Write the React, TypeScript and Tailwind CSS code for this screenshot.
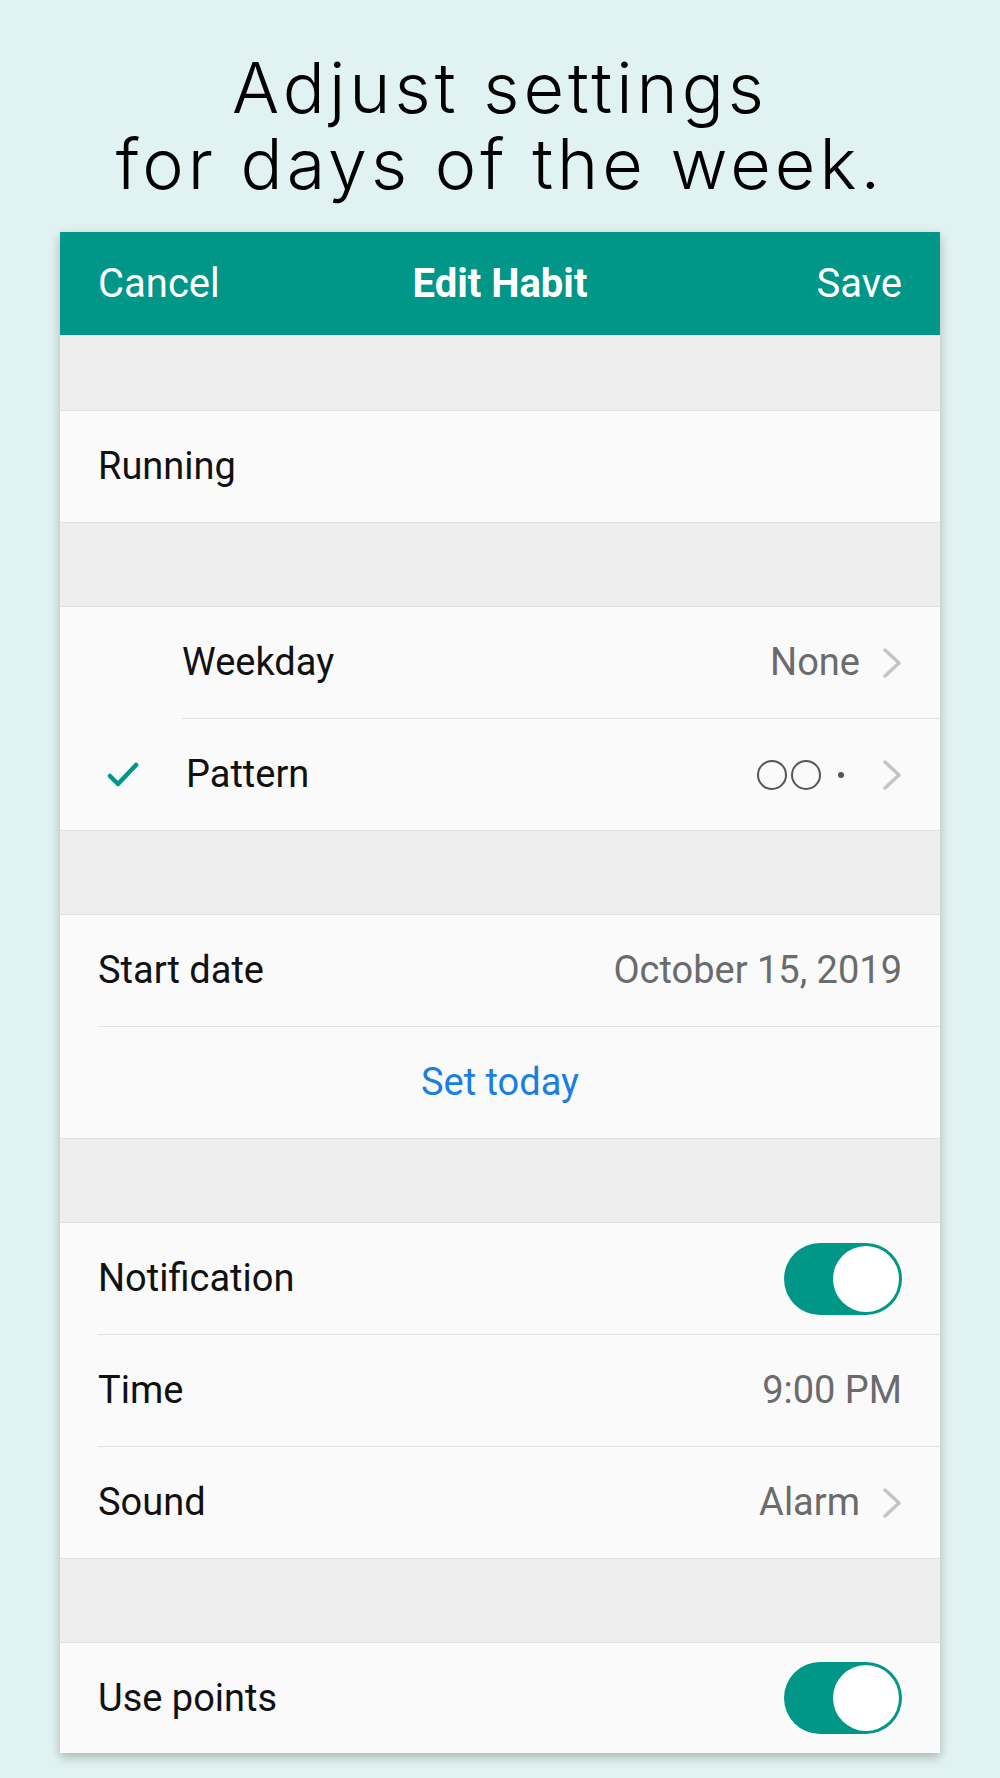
import { ReactNode } from 'react';

const TEAL = '#009688';

function Chevron({ gap = 'ml-[22px]' }: { gap?: string }) {
  return (
    <svg width="20" height="30" viewBox="0 0 20 30" className={`${gap} shrink-0`}>
      <polyline points="3,2 17,15 3,28" fill="none" stroke="#c4c4c4" strokeWidth="3.5" strokeLinecap="round" strokeLinejoin="round" />
    </svg>
  );
}

function Check() {
  return (
    <svg width="32" height="26" viewBox="0 0 32 26">
      <polyline points="3,14 11,22 29,3" fill="none" stroke={TEAL} strokeWidth="4.5" strokeLinecap="round" strokeLinejoin="round" />
    </svg>
  );
}

function Toggle() {
  return (
    <div className="relative h-[72px] w-[118px] rounded-full bg-[#009688]">
      <div className="absolute right-[3px] top-[3px] h-[66px] w-[66px] rounded-full bg-white" />
    </div>
  );
}

function Gap({ h = 'h-[84px]' }: { h?: string }) {
  return <div className={`${h} border-b border-[#e0e0e0] bg-[#eeeeee]`} />;
}

function Row({
  label,
  right,
  last,
  indent,
}: {
  label: ReactNode;
  right?: ReactNode;
  last?: boolean;
  indent?: ReactNode;
}) {
  return (
    <div className={`flex h-[112px] ${last ? 'border-b border-[#e0e0e0]' : ''}`}>
      {indent !== undefined ? (
        <div className="flex w-[122px] shrink-0 items-center pl-[47px]">{indent}</div>
      ) : (
        <div className="w-[38px] shrink-0" />
      )}
      <div
        className={`flex h-full flex-1 items-center justify-between pr-[38px] ${
          last ? '' : 'border-b border-[#e0e0e0]'
        }`}
      >
        <span className="text-[38px] text-[#111111]">{label}</span>
        <div className="flex items-center text-[38px] text-[#6b6b6b]">{right}</div>
      </div>
    </div>
  );
}

export default function App() {
  return (
    <div
      className="h-[1778px] w-[1000px] overflow-hidden bg-[#e0f2f1]"
      style={{ fontFamily: 'Roboto, "Noto Sans", sans-serif' }}
    >
      <p
        className="pt-[50px] text-center text-[70px] font-light leading-[76px] tracking-[4px] text-black"
        style={{ fontFamily: 'Inter, "Open Sans", sans-serif' }}
      >
        Adjust settings
        <br />
        for days of the week.
      </p>

      <div className="mx-[60px] mt-[30px] bg-[#fafafa] shadow-[0_4px_10px_rgba(0,0,0,0.25)]">
        <div className="grid h-[103px] grid-cols-3 items-center bg-[#009688] px-[38px] text-[40px] text-white">
          <span className="justify-self-start">Cancel</span>
          <span className="justify-self-center whitespace-nowrap font-bold">Edit Habit</span>
          <span className="justify-self-end">Save</span>
        </div>

        <Gap h="h-[76px]" />
        <Row label="Running" last />

        <Gap />
        <Row
          indent={null}
          label="Weekday"
          right={
            <>
              <span>None</span>
              <Chevron />
            </>
          }
        />
        <Row
          indent={<Check />}
          last
          label={<span className="pl-[4px]">Pattern</span>}
          right={
            <>
              <span className="h-[30px] w-[30px] rounded-full border-[2.5px] border-[#555555]" />
              <span className="ml-[4px] h-[30px] w-[30px] rounded-full border-[2.5px] border-[#555555]" />
              <span className="ml-[17px] h-[6px] w-[6px] rounded-full bg-[#555555]" />
              <Chevron gap="ml-[38px]" />
            </>
          }
        />

        <Gap />
        <div className="flex h-[112px]">
          <div className="w-[38px] shrink-0" />
          <div className="flex h-full flex-1 items-center justify-between border-b border-[#e0e0e0] pr-[38px]">
            <span className="text-[38px] text-[#111111]">Start date</span>
            <span className="text-[38px] text-[#6b6b6b]">October 15, 2019</span>
          </div>
        </div>
        <div className="flex h-[112px] items-center justify-center border-b border-[#e0e0e0] text-[38px] text-[#1a7fe0]">
          Set today
        </div>

        <Gap />
        <Row label="Notification" right={<Toggle />} />
        <Row label="Time" right={<span>9:00 PM</span>} />
        <Row
          label="Sound"
          last
          right={
            <>
              <span>Alarm</span>
              <Chevron />
            </>
          }
        />

        <Gap />
        <div className="flex h-[110px] items-center justify-between pl-[38px] pr-[38px]">
          <span className="text-[38px] text-[#111111]">Use points</span>
          <Toggle />
        </div>
      </div>
    </div>
  );
}
